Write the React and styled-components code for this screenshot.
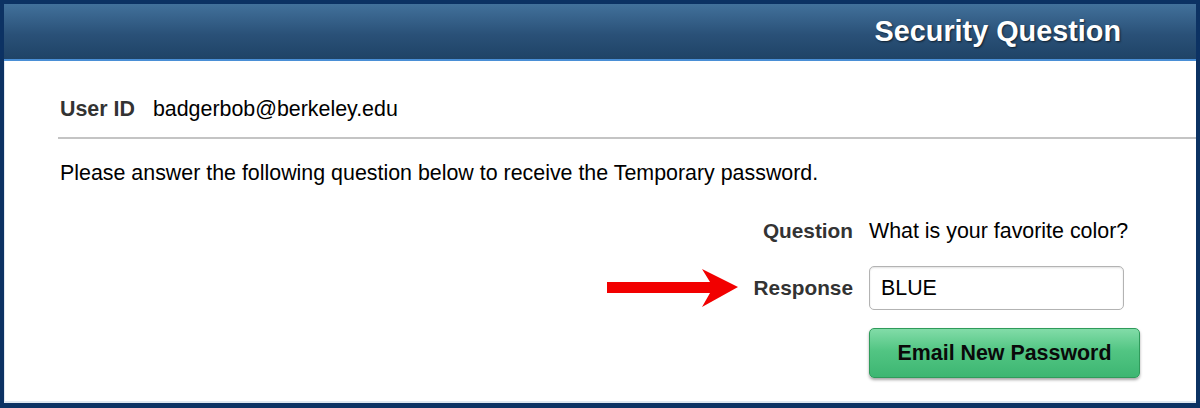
import React from 'react';
import styled, { createGlobalStyle } from 'styled-components';

const GlobalStyle = createGlobalStyle`
    body {
        margin: 0;
        font-family: "Liberation Sans", Arial, sans-serif;
    }
`;

const Frame = styled.div`
    width: 1200px;
    height: 408px;
    box-sizing: border-box;
    padding: 4px 4px 5px 4px;
    background: #0c3263;
    display: flex;
    flex-direction: column;
`;

const Header = styled.div`
    height: 55px;
    flex-shrink: 0;
    background: linear-gradient(#42719b, #2a5178 55%, #1f4366);
    border-bottom: 2px solid #4a8fd6;
    display: flex;
    align-items: center;
    justify-content: flex-end;
    padding-right: 75px;
`;

const Title = styled.h1`
    margin: 0;
    color: #fff;
    font-size: 28.8px;
    font-weight: 700;
    text-shadow: 1px 1px 2px rgba(0, 0, 0, 0.6);
`;

const Body = styled.div`
    flex: 1;
    background: #fff;
    border-bottom: 2px solid #dfe7f0;
    border-left: 1px solid #dfe7f0;
`;

const UserRow = styled.div`
    margin-left: 53px;
    padding: 35px 0 15px 2px;
    border-bottom: 2px solid #c4c4c4;
    display: flex;
    align-items: center;
    gap: 18px;
    font-size: 21.4px;
    line-height: 26px;
`;

const Label = styled.span`
    font-weight: 700;
    color: #333;
    font-size: ${p => p.size || '21px'};
`;

const Value = styled.span`
    color: #000;
    font-size: 21.4px;
    line-height: 26px;
    align-self: ${p => (p.$top ? 'start' : 'center')};
`;

const Intro = styled.p`
    margin: 21px 0 0 55px;
    font-size: 21.4px;
    line-height: 26px;
    color: #000;
`;

const Form = styled.div`
    margin-top: 32px;
    padding-right: 55px;
    display: grid;
    grid-template-columns: auto 272px;
    grid-template-rows: 30px 44px 50px;
    justify-content: end;
    column-gap: 16px;
    row-gap: 18px;
    align-items: center;
`;

const FieldLabel = styled.label`
    position: relative;
    justify-self: end;
    align-self: ${p => (p.$top ? 'start' : 'center')};
    font-weight: 700;
    color: #333;
    font-size: 20.8px;
    line-height: 26px;
`;

const Arrow = styled.svg`
    position: absolute;
    right: calc(100% + 15px);
    top: 50%;
    transform: translateY(-50%);
`;

const TextInput = styled.input`
    width: 255px;
    height: 44px;
    box-sizing: border-box;
    border: 1px solid #b3b3b3;
    border-radius: 5px;
    box-shadow: inset 0 1px 2px rgba(0, 0, 0, 0.12);
    padding: 0 11px;
    font-family: "Liberation Sans", Arial, sans-serif;
    font-size: 21.4px;
    color: #000;
    outline: none;
`;

const Button = styled.button`
    width: 271px;
    height: 50px;
    box-sizing: border-box;
    border: 1px solid #2f9b5b;
    border-radius: 5px;
    background: linear-gradient(#82dca8, #52c583 45%, #3db672);
    box-shadow: 0 2px 3px rgba(0, 0, 0, 0.35);
    font-family: "Liberation Sans", Arial, sans-serif;
    font-weight: 700;
    font-size: 21.4px;
    color: #0a0a0a;
    cursor: pointer;
`;

const Spacer = styled.span``;

const RedArrow = () => (
    <Arrow width="132" height="40" viewBox="0 0 132 40">
        <path d="M0 14 L103 14 L95 1 L131 19 L95 39 L103 25 L0 25 Z" fill="#f20000" />
    </Arrow>
);

export default function App() {
    return (
        <>
            <GlobalStyle />
            <Frame>
                <Header>
                    <Title>Security Question</Title>
                </Header>
                <Body>
                    <UserRow>
                        <Label size="21.4px">User ID</Label>
                        <Value>badgerbob@berkeley.edu</Value>
                    </UserRow>
                    <Intro>Please answer the following question below to receive the Temporary password.</Intro>
                    <Form>
                        <FieldLabel $top>Question</FieldLabel>
                        <Value $top>What is your favorite color?</Value>
                        <FieldLabel htmlFor="response">
                            <RedArrow />
                            Response
                        </FieldLabel>
                        <TextInput id="response" defaultValue="BLUE" />
                        <Spacer />
                        <Button>Email New Password</Button>
                    </Form>
                </Body>
            </Frame>
        </>
    );
}
